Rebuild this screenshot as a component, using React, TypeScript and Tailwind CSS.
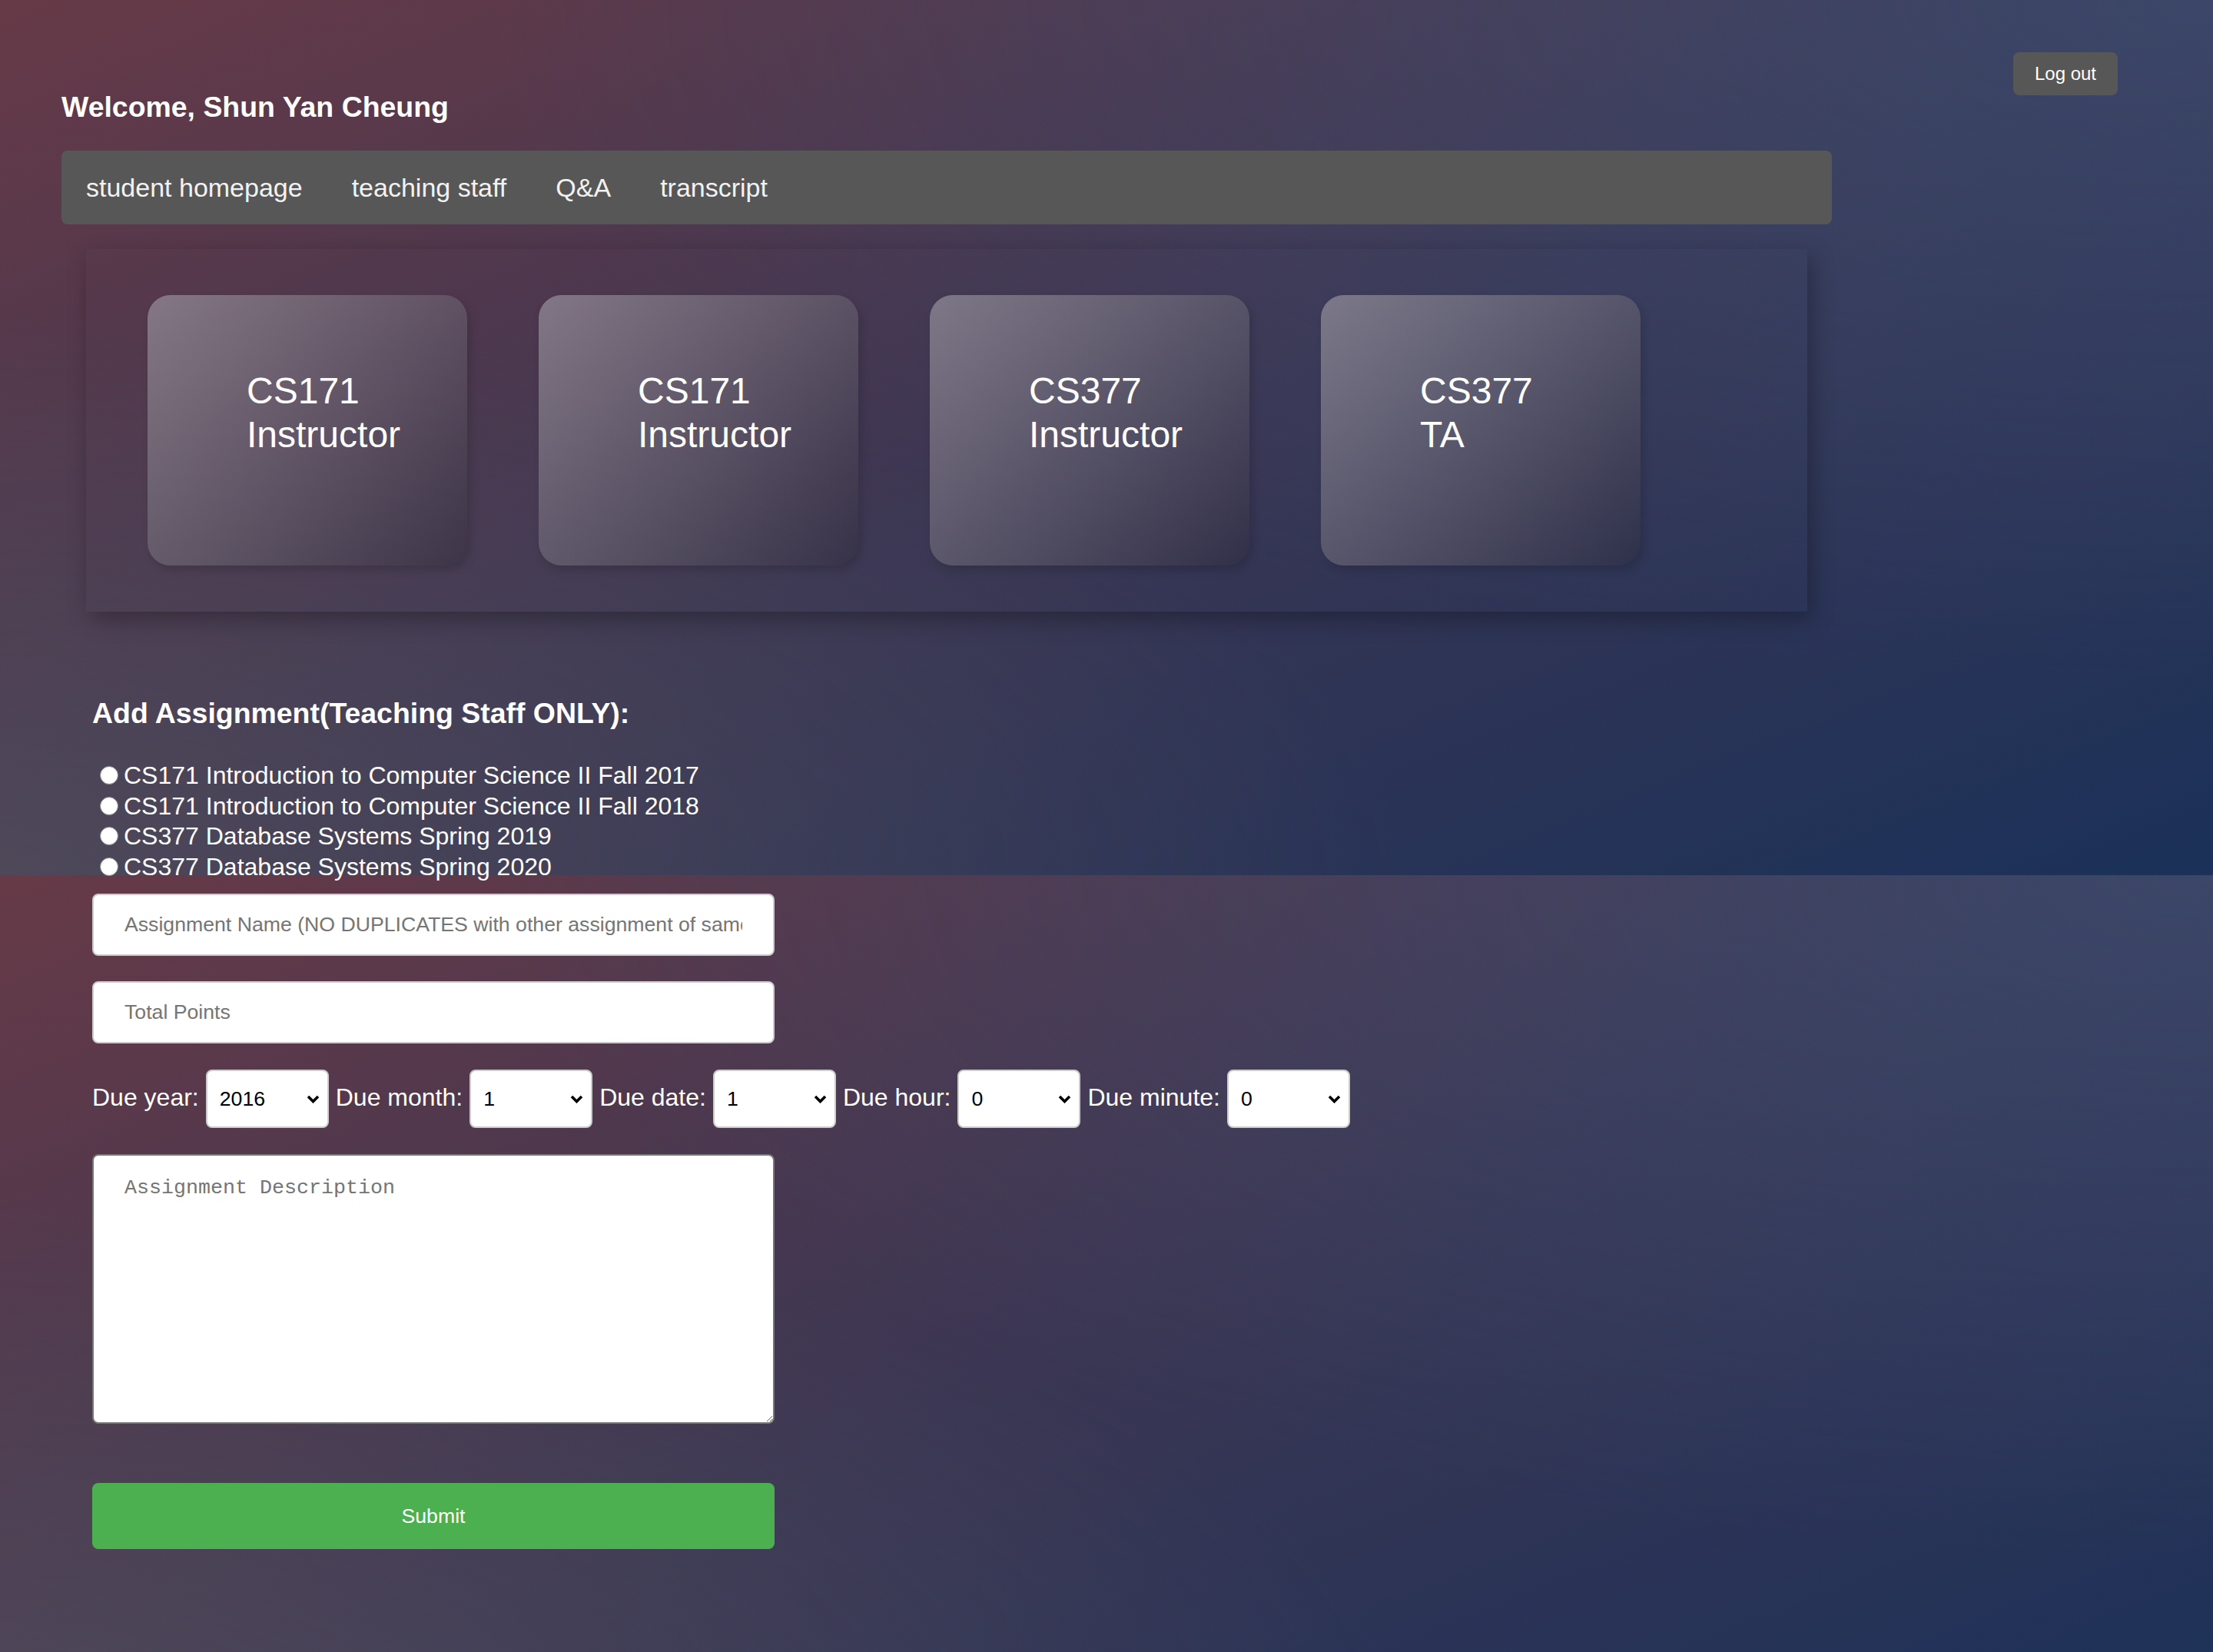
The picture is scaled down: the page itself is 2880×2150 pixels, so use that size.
const navLinks = ['student homepage', 'teaching staff', 'Q&A', 'transcript'];

const roles = [
  { course: 'CS171', role: 'Instructor' },
  { course: 'CS171', role: 'Instructor' },
  { course: 'CS377', role: 'Instructor' },
  { course: 'CS377', role: 'TA' },
];

const courses = [
  'CS171 Introduction to Computer Science II Fall 2017',
  'CS171 Introduction to Computer Science II Fall 2018',
  'CS377 Database Systems Spring 2019',
  'CS377 Database Systems Spring 2020',
];

const dueFields = [
  { label: 'Due year:', value: '2016' },
  { label: 'Due month:', value: '1' },
  { label: 'Due date:', value: '1' },
  { label: 'Due hour:', value: '0' },
  { label: 'Due minute:', value: '0' },
];

function FakeSelect({ value }: { value: string }) {
  return (
    <div className="flex h-[76px] w-[160px] items-center justify-between rounded-[8px] border-2 border-[#cccccc] bg-white pl-[16px] pr-[10px] text-[26.67px] text-black">
      <span>{value}</span>
      <svg width="17" height="11" viewBox="0 0 17 11" fill="none">
        <path d="M2 2 L8.5 8.5 L15 2" stroke="#000" strokeWidth="3.6" />
      </svg>
    </div>
  );
}

export default function App() {
  return (
    <div className="min-h-screen w-full bg-[image:radial-gradient(ellipse_at_top_right,rgba(59,81,118,0.6),transparent_55%),radial-gradient(ellipse_at_bottom_left,rgba(97,90,95,0.5),transparent_45%),linear-gradient(to_bottom_right,#673a47,#3b3653_50%,#1b3159)] bg-[length:100%_1139px] font-['Liberation_Sans',Arial,sans-serif] text-white">
      {/* header */}
      <div className="flex items-start justify-between pl-[80px] pr-[124px]">
        <h3 className="mt-[118px] text-[37.44px] font-bold leading-[43px]">Welcome, Shun Yan Cheung</h3>
        <button className="mt-[68px] h-[56px] w-[136px] rounded-[8px] bg-[#575757] text-[24px] text-white">Log out</button>
      </div>

      {/* top nav */}
      <nav className="ml-[80px] mt-[35px] flex h-[96px] w-[2304px] rounded-[8px] bg-[#575757]">
        {navLinks.map((link) => (
          <a key={link} className="px-[32px] text-[34px] leading-[96px] text-[#f2f2f2]">
            {link}
          </a>
        ))}
      </nav>

      {/* role cards */}
      <div className="ml-[112px] mt-[32px] flex h-[472px] w-[2240px] gap-[93px] pl-[80px] pt-[60px] shadow-[6px_10px_28px_rgba(0,0,0,0.3)]">
        {roles.map((r, i) => (
          <div
            key={i}
            className="h-[352px] w-[416px] rounded-[30px] bg-[linear-gradient(135deg,rgba(160,155,165,0.64),rgba(45,40,55,0.4))] pl-[129px] pt-[96px] text-[48px] leading-[57px] shadow-[4px_6px_12px_rgba(0,0,0,0.15)]"
          >
            <div>{r.course}</div>
            <div>{r.role}</div>
          </div>
        ))}
      </div>

      {/* add assignment form */}
      <div className="mt-[111px] pl-[120px]">
        <h3 className="text-[37.44px] font-bold leading-[43px]">Add Assignment(Teaching Staff ONLY):</h3>

        <div className="mt-[40px]">
          {courses.map((c) => (
            <label key={c} className="flex h-[39.5px] items-start text-[32px] leading-[39.5px]">
              <span className="ml-[10px] mr-[7px] mt-[7px] h-[24px] w-[24px] rounded-full border border-[#8a8a8a] bg-white" />
              {c}
            </label>
          ))}
        </div>

        <input
          type="text"
          placeholder="Assignment Name (NO DUPLICATES with other assignment of same course)"
          className="mt-[15px] block h-[81px] w-[888px] rounded-[8px] border-2 border-[#cccccc] bg-white px-[40px] text-[26.67px] text-black placeholder:text-[#757575]"
        />
        <input
          type="text"
          placeholder="Total Points"
          className="mt-[33px] block h-[81px] w-[888px] rounded-[8px] border-2 border-[#cccccc] bg-white px-[40px] text-[26.67px] text-black placeholder:text-[#757575]"
        />

        <div className="mt-[34px] flex items-baseline gap-[9px] text-[32px]">
          {dueFields.map((f) => (
            <div key={f.label} className="flex items-baseline gap-[9px]">
              <span>{f.label}</span>
              <FakeSelect value={f.value} />
            </div>
          ))}
        </div>

        <textarea
          placeholder="Assignment Description"
          className="mt-[34px] block h-[351px] w-[888px] rounded-[8px] border-2 border-[#767676] bg-white px-[40px] py-[22px] font-['Liberation_Mono',monospace] text-[26.67px] text-black placeholder:text-[#757575]"
        />

        <button className="mt-[77px] block h-[86px] w-[888px] rounded-[8px] bg-[#4caf50] text-[26.67px] text-white">
          Submit
        </button>
      </div>
    </div>
  );
}
